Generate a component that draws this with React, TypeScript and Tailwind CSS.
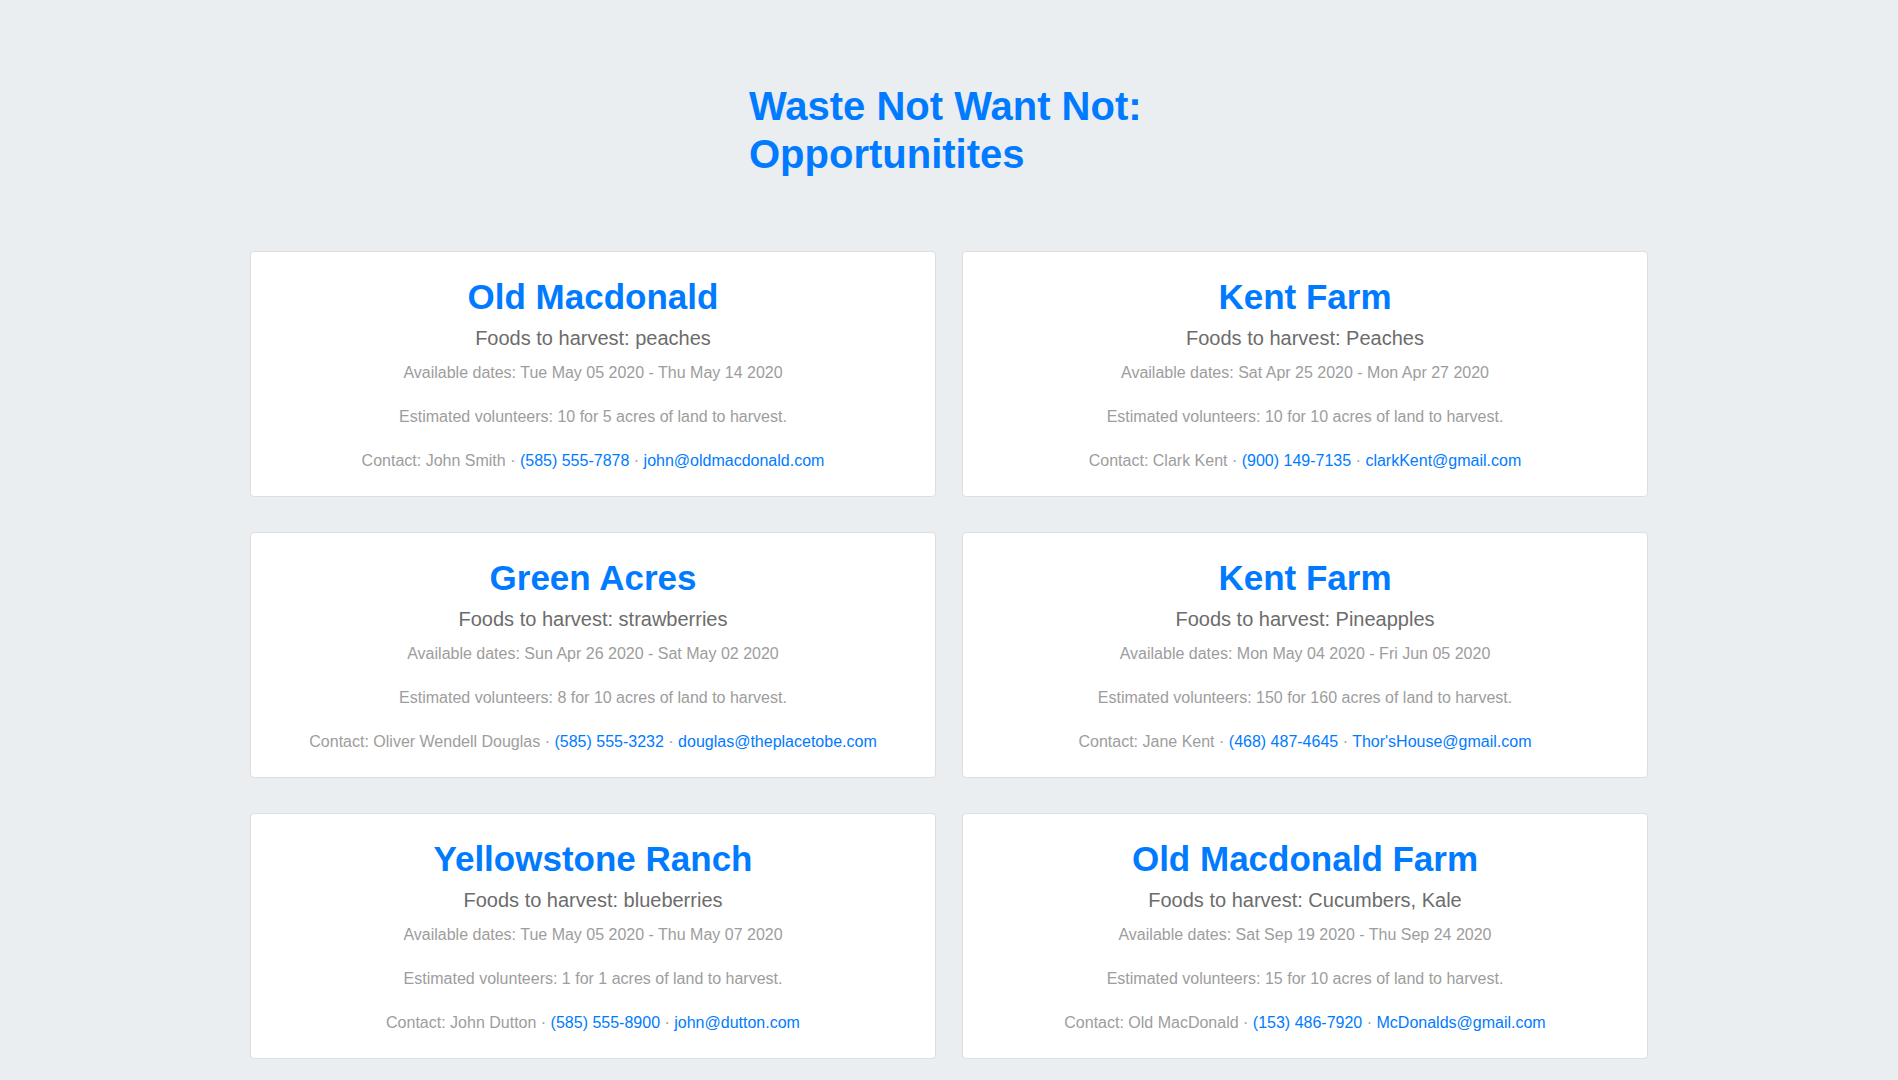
const farms = [
  {
    name: "Old Macdonald",
    foods: "peaches",
    dates: "Tue May 05 2020 - Thu May 14 2020",
    volunteers: 10,
    acres: 5,
    contact: "John Smith",
    phone: "(585) 555-7878",
    email: "john@oldmacdonald.com",
  },
  {
    name: "Kent Farm",
    foods: "Peaches",
    dates: "Sat Apr 25 2020 - Mon Apr 27 2020",
    volunteers: 10,
    acres: 10,
    contact: "Clark Kent",
    phone: "(900) 149-7135",
    email: "clarkKent@gmail.com",
  },
  {
    name: "Green Acres",
    foods: "strawberries",
    dates: "Sun Apr 26 2020 - Sat May 02 2020",
    volunteers: 8,
    acres: 10,
    contact: "Oliver Wendell Douglas",
    phone: "(585) 555-3232",
    email: "douglas@theplacetobe.com",
  },
  {
    name: "Kent Farm",
    foods: "Pineapples",
    dates: "Mon May 04 2020 - Fri Jun 05 2020",
    volunteers: 150,
    acres: 160,
    contact: "Jane Kent",
    phone: "(468) 487-4645",
    email: "Thor'sHouse@gmail.com",
  },
  {
    name: "Yellowstone Ranch",
    foods: "blueberries",
    dates: "Tue May 05 2020 - Thu May 07 2020",
    volunteers: 1,
    acres: 1,
    contact: "John Dutton",
    phone: "(585) 555-8900",
    email: "john@dutton.com",
  },
  {
    name: "Old Macdonald Farm",
    foods: "Cucumbers, Kale",
    dates: "Sat Sep 19 2020 - Thu Sep 24 2020",
    volunteers: 15,
    acres: 10,
    contact: "Old MacDonald",
    phone: "(153) 486-7920",
    email: "McDonalds@gmail.com",
  },
];

type Farm = (typeof farms)[number];

function FarmCard({ farm }: { farm: Farm }) {
  return (
    <div className="bg-white border border-[#dcdee0] rounded-[4px] pt-[25px] pb-[23px] px-5 text-center">
      <h2 className="text-[35px] leading-[40px] font-bold text-[#007bff]">{farm.name}</h2>
      <h5 className="mt-[9px] text-[20px] leading-[24px] text-[#6c6c6c]">
        Foods to harvest: {farm.foods}
      </h5>
      <p className="mt-[11px] text-[16px] leading-[24px] text-[#9d9d9d]">
        Available dates: {farm.dates}
      </p>
      <p className="mt-5 text-[16px] leading-[24px] text-[#9d9d9d]">
        Estimated volunteers: {farm.volunteers} for {farm.acres} acres of land to harvest.
      </p>
      <p className="mt-5 text-[16px] leading-[24px] text-[#9d9d9d]">
        Contact: {farm.contact} ·{" "}
        <a href="#" className="text-[#007bff]">
          {farm.phone}
        </a>{" "}
        ·{" "}
        <a href="#" className="text-[#007bff]">
          {farm.email}
        </a>
      </p>
    </div>
  );
}

export default function App() {
  return (
    <main
      className="min-h-screen bg-[#ebeef1] pt-[82px] pb-10"
      style={{ fontFamily: '"Liberation Sans", Arial, Helvetica, sans-serif' }}
    >
      <h1 className="w-[400px] mx-auto text-[40px] leading-[48px] font-bold text-[#007bff]">
        Waste Not Want Not: Opportunitites
      </h1>
      <div className="w-[1398px] mx-auto mt-[73px] grid grid-cols-2 gap-x-[26px] gap-y-[35px]">
        {farms.map((farm, i) => (
          <FarmCard key={i} farm={farm} />
        ))}
      </div>
    </main>
  );
}
